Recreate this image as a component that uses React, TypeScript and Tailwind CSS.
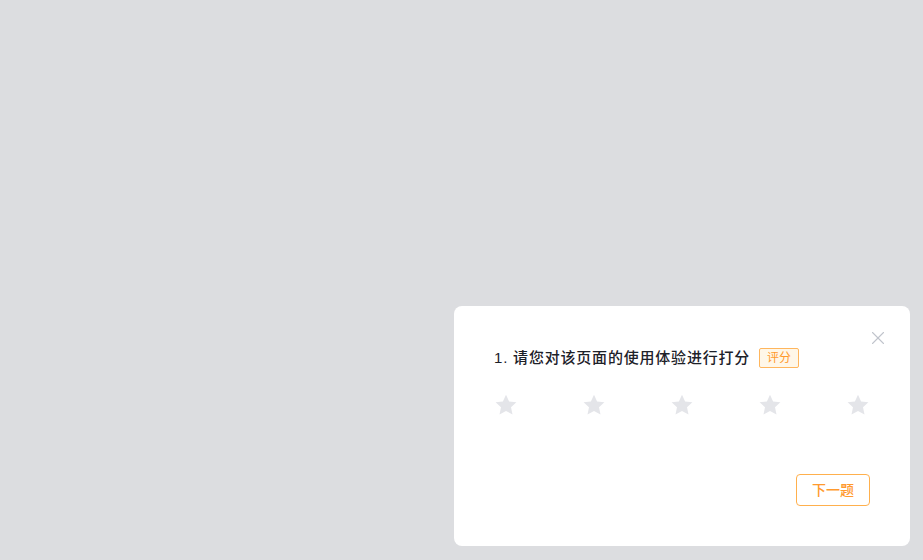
import { X } from "lucide-react";

const Star: React.FC = () => (
  <svg width="24" height="24" viewBox="0 0 24 24" className="text-[#e4e5e9]">
    <path
      fill="currentColor"
      d="M12 1.8l3.1 6.7 7.3.8-5.4 5 1.5 7.2L12 17.9l-6.5 3.6L7 14.3 1.6 9.3l7.3-.8z"
    />
  </svg>
);

const App: React.FC = () => {
  return (
    <div className="w-[923px] h-[560px] bg-[#dcdde0] overflow-hidden font-['Liberation_Sans','Noto_Sans_CJK_SC',sans-serif] flex items-end justify-end pr-[13px] pb-[14px]">
      <div className="relative w-[456px] h-[240px] bg-white rounded-lg px-10 pt-[42px] pb-10 flex flex-col">
        <button className="absolute top-[21px] right-[21px] text-[#c0c4cc]">
          <X size={22} strokeWidth={1.2} />
        </button>
        <div className="flex items-center h-5">
          <span className="text-[15px] font-medium text-[#1d2129] tracking-[0.8px]">1. 请您对该页面的使用体验进行打分</span>
          <span className="ml-[9px] w-10 h-5 flex items-center justify-center text-xs text-[#ff9a2e] bg-[#fff7e8] border border-[#ffb65d] rounded-[2px]">
            评分
          </span>
        </div>
        <div className="flex justify-between mt-[25px]">
          <Star />
          <Star />
          <Star />
          <Star />
          <Star />
        </div>
        <div className="mt-auto flex justify-end">
          <button className="w-[74px] h-8 border border-[#ffb04d] rounded text-sm font-medium text-[#ff9a2e] bg-white">
            下一题
          </button>
        </div>
      </div>
    </div>
  );
};

export default App;
